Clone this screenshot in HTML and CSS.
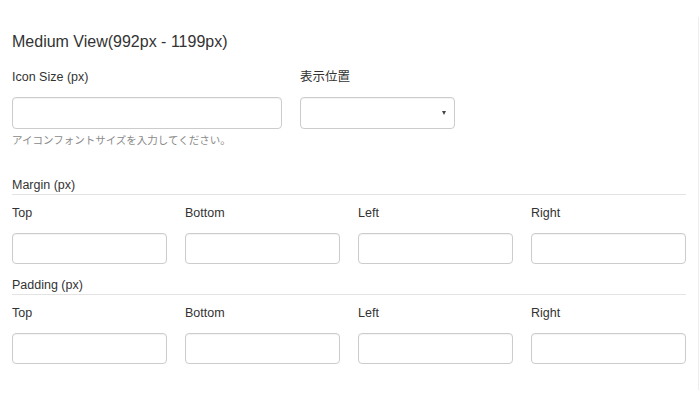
FILE: index.html
```html
<!DOCTYPE html>
<html lang="ja">
<head>
<meta charset="utf-8">
<link rel="stylesheet" href="styles.css">
</head>
<body>
<div class="panel">
  <h3 class="title">Medium View(992px - 1199px)</h3>
  <div class="row-top">
    <div class="field field-wide">
      <label class="label">Icon Size (px)</label>
      <input class="input" type="text">
      <p class="help">アイコンフォントサイズを入力してください。</p>
    </div>
    <div class="field field-select">
      <label class="label">表示位置</label>
      <div class="select"><span class="caret"></span></div>
    </div>
  </div>

  <div class="group group-margin">
    <div class="group-title">Margin (px)</div>
    <div class="grid4">
      <div class="field"><label class="label">Top</label><input class="input input-sm" type="text"></div>
      <div class="field"><label class="label">Bottom</label><input class="input input-sm" type="text"></div>
      <div class="field"><label class="label">Left</label><input class="input input-sm" type="text"></div>
      <div class="field"><label class="label">Right</label><input class="input input-sm" type="text"></div>
    </div>
  </div>

  <div class="group group-padding">
    <div class="group-title">Padding (px)</div>
    <div class="grid4">
      <div class="field"><label class="label">Top</label><input class="input input-sm" type="text"></div>
      <div class="field"><label class="label">Bottom</label><input class="input input-sm" type="text"></div>
      <div class="field"><label class="label">Left</label><input class="input input-sm" type="text"></div>
      <div class="field"><label class="label">Right</label><input class="input input-sm" type="text"></div>
    </div>
  </div>
</div>
</body>
</html>
```

FILE: styles.css
```css
html, body {
  margin: 0;
  padding: 0;
  background: #fff;
}
body {
  font-family: "Liberation Sans", Arial, "Noto Sans CJK JP", sans-serif;
  color: #333;
}
.panel {
  margin-top: 17px;
  width: 699px;
  height: 373px;
  padding: 15px 0 0 12px;
  box-sizing: border-box;
  border-right: 1px solid #eeeeee;
}
.title {
  margin: 0;
  font-size: 16px;
  line-height: 20px;
  font-weight: normal;
  color: #333;
}
.row-top {
  display: flex;
  gap: 18px;
  margin-top: 16px;
}
.field {
  display: flex;
  flex-direction: column;
}
.field-wide { width: 270px; }
.field-select { width: 155px; }
.label {
  font-size: 12.5px;
  line-height: 18px;
  height: 18px;
  margin-bottom: 11px;
  color: #333;
}
.input {
  display: block;
  box-sizing: border-box;
  width: 100%;
  height: 32px;
  margin: 0;
  border: 1px solid #cccccc;
  border-radius: 4px;
  background: #fff;
  box-shadow: inset 0 1px 1px rgba(0,0,0,0.05);
}
.input-sm { height: 31px; }
.select {
  position: relative;
  box-sizing: border-box;
  height: 32px;
  border: 1px solid #cccccc;
  border-radius: 4px;
  background: #fff;
  box-shadow: inset 0 1px 1px rgba(0,0,0,0.05);
}
.caret {
  position: absolute;
  right: 8px;
  top: 13px;
  width: 0;
  height: 0;
  border-left: 2.5px solid transparent;
  border-right: 2.5px solid transparent;
  border-top: 4px solid #444;
}
.help {
  margin: 4px 0 0 0;
  font-size: 10.5px;
  line-height: 14px;
  color: #8a8a8a;
  white-space: nowrap;
}
.group-margin { margin-top: 29px; }
.group-padding { margin-top: 12px; }
.group-title {
  width: 674px;
  font-size: 12.5px;
  line-height: 18px;
  border-bottom: 1px solid #e3e3e3;
}
.grid4 {
  display: grid;
  grid-template-columns: repeat(4, 155px);
  column-gap: 18px;
  margin-top: 9px;
}
```
